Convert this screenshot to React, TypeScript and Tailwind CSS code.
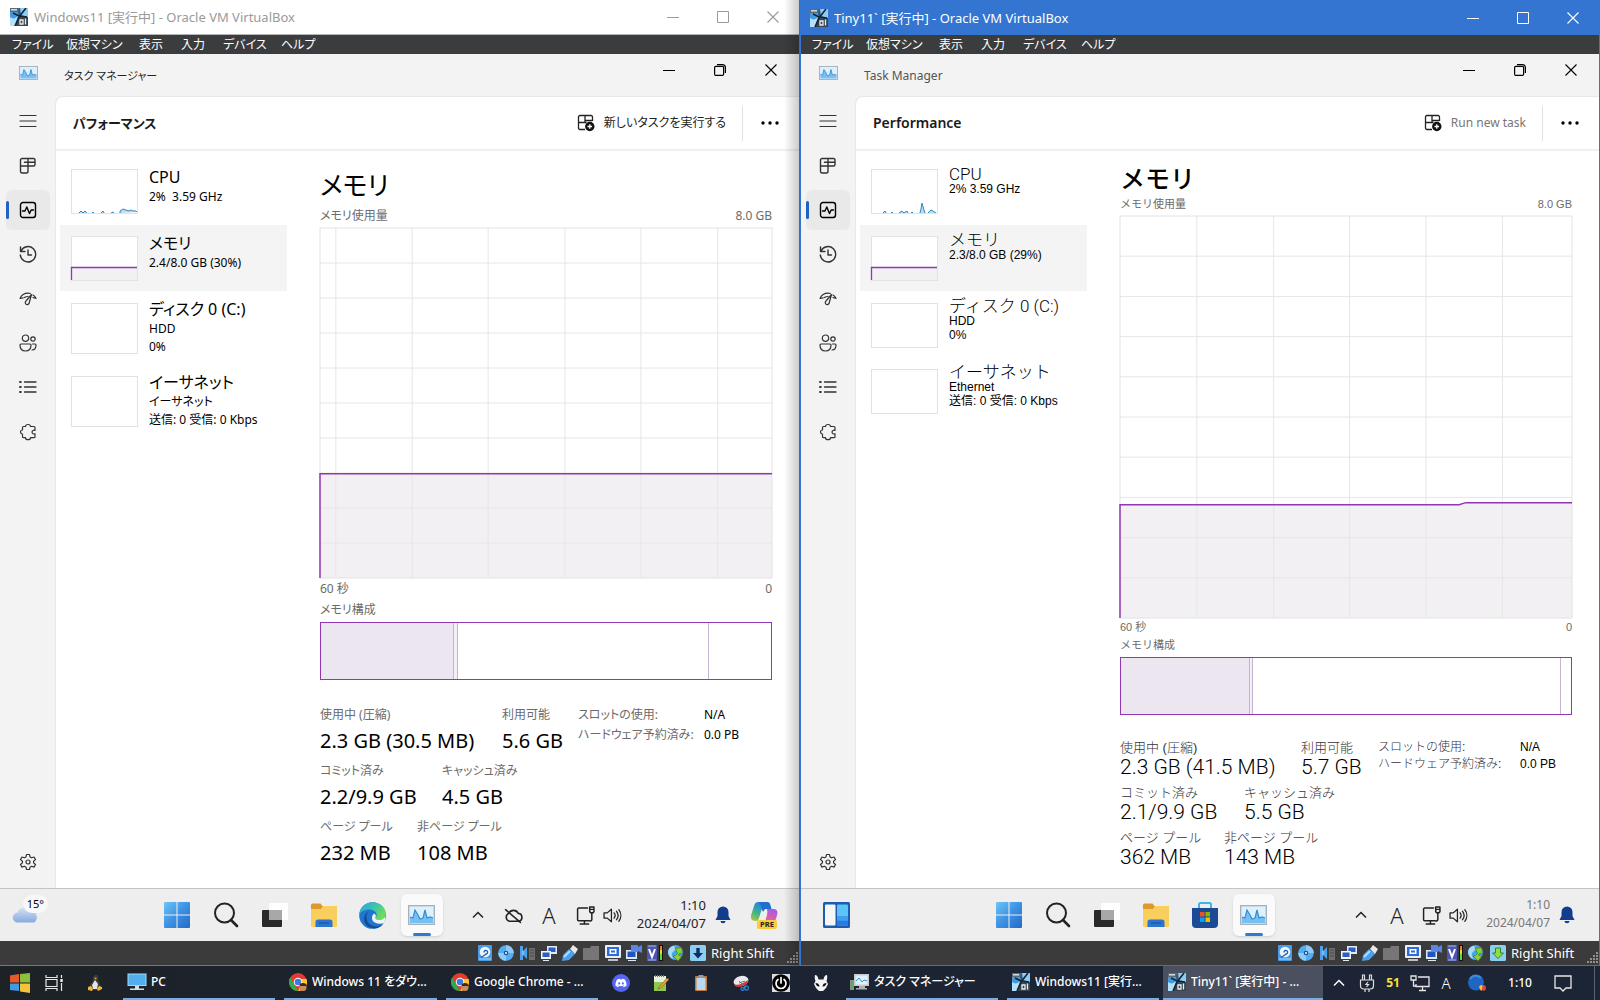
import React from "react";
import { FaDiscord } from "react-icons/fa";

type Kids = { children: React.ReactNode };

/* ---------- line icons ---------- */

function Line({ children, size = "size-[18px]", sw = 1.2 }: Kids & { size?: string; sw?: number }) {
  return (
    <svg viewBox="0 0 18 18" className={size} fill="none" stroke="currentColor" strokeWidth={sw} strokeLinecap="round" strokeLinejoin="round" aria-hidden="true">
      {children}
    </svg>
  );
}

const MenuIcon = () => (
  <Line>
    <path d="M1 3.500h16M1 9h16M1 14.500h16" />
  </Line>
);
const ProcessesIcon = () => (
  <Line sw={1.4}>
    <path d="M3 1.500h11.500a1.500 1.500 0 0 1 1.500 1.500v4.500a1.500 1.500 0 0 1-1.500 1.500H9v5.500a1.500 1.500 0 0 1-1.500 1.500H3a1.500 1.500 0 0 1-1.500-1.500V3A1.500 1.500 0 0 1 3 1.500zM1.500 9H9M9 1.500V9M5.500 5.200H16" />
  </Line>
);
const PerformanceIcon = () => (
  <Line sw={1.4}>
    <rect x="1.500" y="1.500" width="15" height="15" rx="2.500" />
    <path d="M3.500 10h2.500l1.800-4 2.700 6.500 1.700-3.500h2.300" />
  </Line>
);
const HistoryIcon = () => (
  <Line sw={1.4}>
    <path d="M1.500 2v4.500h4.500M2 6a7.700 7.700 0 1 1-.7 4M9 5v5h3.500" />
  </Line>
);
const StartupIcon = () => (
  <Line>
    <path d="M1 8.500c1.500-3.500 4-5.300 8-5.300 1 0 1.600.1 2.300.3M14 5c1.400.8 2.300 1.900 3 3.500M1 8.500l3.200-.6M17 8.500l-3-1M12.500 4.500 7 11a2 2 0 1 0 3.200 2zM5.500 7.500C6.500 6.800 7.500 6.500 9 6.500" />
  </Line>
);
const UsersIcon = () => (
  <Line>
    <circle cx="6.500" cy="4.200" r="3.200" />
    <circle cx="14" cy="5" r="2.200" />
    <path d="M2 10h9a1 1 0 0 1 1 1c0 3.500-1.800 6-5.500 6S1 14.500 1 11a1 1 0 0 1 1-1zM13.500 10h2.500a1 1 0 0 1 1 1c0 3-1.300 5-4 5" />
  </Line>
);
const DetailsIcon = () => (
  <Line sw={1.3}>
    <path d="M5.500 4H17M5.500 9H17M5.500 14H17" />
    <path d="M1 4h.8M1 9h.8M1 14h.8" strokeWidth="2" />
  </Line>
);
const ServicesIcon = () => (
  <Line>
    <path d="M6.500 3.500a2.500 2 0 0 1 5 0h3.500a1 1 0 0 1 1 1v3a2 2 0 0 0-3 1.500 2 2 0 0 0 3 1.700v3a1 1 0 0 1-1 1h-3.500a2.500 2 0 0 1-5 0H4.500a1 1 0 0 1-1-1v-2.700a2 2 0 0 1 0-4V4.500a1 1 0 0 1 1-1z" />
  </Line>
);
const GearIcon = () => (
  <Line>
    <circle cx="9" cy="9" r="2" />
    <path d="M7.500 1.500h3l.5 2.400 1.600.9 2.400-.8 1.500 2.600-1.900 1.600v1.700l1.900 1.600-1.500 2.600-2.400-.8-1.600.9-.5 2.300h-3L7 14.200l-1.600-.9-2.400.8-1.500-2.600 1.900-1.600V8.200L1.500 6.600 3 4l2.400.8L7 3.900z" />
  </Line>
);
const RunTaskIcon = () => (
  <svg viewBox="0 0 18 18" className="size-[18px]" fill="none" stroke="#222" strokeWidth="1.300" aria-hidden="true">
    <path d="M8 15.500H3A1.500 1.500 0 0 1 1.500 14V3A1.500 1.500 0 0 1 3 1.500h11A1.500 1.500 0 0 1 15.500 3v4M8 1.500v7M1.500 8.500h8M8 6.500h7.500" />
    <circle cx="12.800" cy="12.500" r="4.700" fill="#111" stroke="none" />
    <path d="M12.800 10.200v4.600M10.500 12.500h4.600" stroke="#fff" />
  </svg>
);
const Minimize = () => (
  <svg viewBox="0 0 12 12" className="size-3" stroke="currentColor" fill="none" aria-hidden="true">
    <path d="M0 6.500h12" />
  </svg>
);
const Maximize = () => (
  <svg viewBox="0 0 12 12" className="size-3" stroke="currentColor" fill="none" aria-hidden="true">
    <path d="M.5.5h11v11H.5z" />
  </svg>
);
const Restore = () => (
  <svg viewBox="0 0 12 12" className="size-3" stroke="currentColor" strokeWidth="1.200" fill="none" aria-hidden="true">
    <rect x=".6" y="2.400" width="9" height="9" rx="1.200" />
    <path d="M3 .6h5.400a3 3 0 0 1 3 3V9" />
  </svg>
);
const Close = () => (
  <svg viewBox="0 0 12 12" className="size-3" stroke="currentColor" strokeWidth="1.100" fill="none" aria-hidden="true">
    <path d="M.5.5l11 11M11.500.5l-11 11" />
  </svg>
);
const Chevron = () => (
  <svg viewBox="0 0 12 8" className="h-2 w-3" stroke="currentColor" strokeWidth="1.500" fill="none" aria-hidden="true">
    <path d="M1 6.500l5-5 5 5" />
  </svg>
);

/* ---------- colour icons ---------- */

const VBoxIcon = () => (
  <svg viewBox="0 0 18 18" className="size-[18px] shrink-0" aria-hidden="true">
    <rect width="18" height="18" fill="#2a5b86" />
    <path d="M0 0h9l-1 4H0z" fill="#5d6a72" />
    <path d="M1 1.800h6" stroke="#dfe6ea" strokeWidth="1.400" />
    <path d="M0 4h8l1 5-3 9H0z" fill="#3f9ae4" />
    <path d="M10 0h8v9l-7-2z" fill="#8ccdf4" />
    <path d="M0 9c3 2 5 2 8-1l-3 10H0z" fill="#b4e0fb" />
    <path d="M8 10l10-1v9H6z" fill="#39444d" />
    <path d="M16 0 9 9 5 18M3 5l6 3 8 1" stroke="#16242f" strokeWidth="1.600" fill="none" />
    <path d="M10 12h3v4h-3zM15.500 10.500v6" stroke="#e6eef3" strokeWidth="1.300" fill="none" />
  </svg>
);
const GraphIcon = ({ size }: { size: string }) => (
  <svg viewBox="0 0 27 20" className={size} aria-hidden="true">
    <rect x=".7" y=".7" width="25.600" height="18.600" fill="#dff0fb" stroke="#9fb0bd" strokeWidth="1.300" />
    <path d="M2 18v-6l3 1 2-8 3 5 2 4 3-1 2-8 2 8 3-1 3 1v5z" fill="#79c0f2" />
    <path d="M2 12l3 1 2-8 3 5 2 4 3-1 2-8 2 8 3-1 3 1" fill="none" stroke="#2f8fd8" strokeWidth="1.200" />
  </svg>
);
const WinLogo = () => (
  <svg viewBox="0 0 26 26" className="size-[26px]" aria-hidden="true">
    <defs>
      <linearGradient id="winlogo" x1="0" y1="0" x2="1" y2="1">
        <stop offset="0" stopColor="#6cc4fa" />
        <stop offset=".5" stopColor="#3d92e2" />
        <stop offset="1" stopColor="#2669c6" />
      </linearGradient>
    </defs>
    <path d="M0 1a1 1 0 0 1 1-1h11.500v12.500H0zM13.500 0H25a1 1 0 0 1 1 1v11.500H13.500zM0 13.500h12.500V26H1a1 1 0 0 1-1-1zM13.500 13.500H26V25a1 1 0 0 1-1 1H13.500z" fill="url(#winlogo)" />
  </svg>
);
const SearchIcon = () => (
  <svg viewBox="0 0 26 26" className="size-[26px]" fill="none" stroke="#222" aria-hidden="true">
    <circle cx="11.500" cy="11" r="9.500" strokeWidth="2" />
    <path d="M18 18l6 6" strokeWidth="2.600" strokeLinecap="round" />
  </svg>
);
const TaskViewIcon = () => (
  <svg viewBox="0 0 28 26" className="h-[26px] w-7" aria-hidden="true">
    <rect x="1" y="8" width="20" height="17" rx="1" fill="#2a2a2a" />
    <rect x="8" y="1" width="19" height="17" rx="1" fill="#fff" opacity=".9" />
    <rect x="8" y="8" width="13" height="10" fill="#a8a8a8" />
  </svg>
);
const FolderIcon = () => (
  <svg viewBox="0 0 28 26" className="h-[26px] w-7" aria-hidden="true">
    <path d="M1 3a1.500 1.500 0 0 1 1.500-1.500h8l2.500 3-1 3H1z" fill="#dc9a2b" />
    <path d="M1 7h10l2-3h14v20a1 1 0 0 1-1 1H2a1 1 0 0 1-1-1z" fill="#f8ce5c" />
    <path d="M5.500 25v-5a2.500 2.500 0 0 1 2.500-2.500h12a2.500 2.500 0 0 1 2.500 2.500v5z" fill="#2c74cc" />
    <path d="M9 21h10" stroke="#1c5bb0" strokeWidth="1.500" />
  </svg>
);
const EdgeIcon = () => (
  <svg viewBox="0 0 26 26" className="size-[27px]" aria-hidden="true">
    <defs>
      <linearGradient id="edgetop" x1="0" y1="0" x2="1" y2=".5">
        <stop offset="0" stopColor="#2ba7e0" />
        <stop offset=".5" stopColor="#38c0b8" />
        <stop offset="1" stopColor="#6bdc5c" />
      </linearGradient>
    </defs>
    <circle cx="13" cy="13" r="12.800" fill="#1f76cf" />
    <path d="M.3 12C1 5 6.300.2 13 .2 20.500.2 25.800 5.500 25.800 11c0 4-3 6.200-6.300 6.200-2.500 0-4-1-3.800-2 .8-1 1.300-1.700 1.300-3 0-2.500-3-5-7.300-5C5 7.200 1.500 9.500.3 12z" fill="url(#edgetop)" />
    <path d="M10 8.800c-4 2.200-4 10.200 2 13.700 4 2.200 9 1.300 11.800-2C20 27 9 27 5.500 19.500 4 15 6 10 10 8.800z" fill="#134c94" />
    <path d="M15.700 15.200c-.2 1 1.300 2 3.800 2 2.300 0 4.500-1 5.600-3 .3 2 0 4-1 5.700-3 1.500-9 1.500-11-2-1.300-2.500-.5-5.500 1.500-6.900 2 1 1.900 3 1.100 4.200z" fill="#f0f4f6" />
  </svg>
);
const StoreIcon = () => (
  <svg viewBox="0 0 26 26" className="size-[26px]" aria-hidden="true">
    <path d="M7 7V2.500A1.500 1.500 0 0 1 8.500 1h9A1.500 1.500 0 0 1 19 2.500V7" fill="none" stroke="#3db4ee" strokeWidth="2" />
    <path d="M0 6h26v16a4 4 0 0 1-4 4H4a4 4 0 0 1-4-4z" fill="#1b4b94" />
    <path d="M8 10h4.500v4.500H8z" fill="#f25022" />
    <path d="M13.500 10H18v4.500h-4.500z" fill="#7fba00" />
    <path d="M8 15.500h4.500V20H8z" fill="#00a4ef" />
    <path d="M13.500 15.500H18V20h-4.500z" fill="#ffb900" />
  </svg>
);
const WidgetsIcon = () => (
  <svg viewBox="0 0 27 26" className="h-[26px] w-[27px]" aria-hidden="true">
    <rect width="27" height="26" rx="1.500" fill="#1d5cae" />
    <rect x="2" y="2.500" width="10.500" height="21" rx="1" fill="#f4f6f8" />
    <rect x="14" y="2.500" width="11" height="21" rx="1" fill="#5cc3f6" />
    <path d="M14 14h11v4.500H14z" fill="#3c9ff0" />
    <path d="M14 18.500h11v4a1 1 0 0 1-1 1h-9a1 1 0 0 1-1-1z" fill="#2a7be0" />
  </svg>
);
const CloudIcon = () => (
  <svg viewBox="0 0 28 18" className="h-[18px] w-7" aria-hidden="true">
    <defs>
      <linearGradient id="cloud" x1="0" y1="0" x2="0" y2="1">
        <stop offset="0" stopColor="#d4e2f8" />
        <stop offset="1" stopColor="#86aade" />
      </linearGradient>
    </defs>
    <path d="M6 17.500a5 5 0 0 1-.5-10A8 8 0 0 1 20 6.500a6 6 0 0 1 2 11z" fill="url(#cloud)" />
  </svg>
);
const CopilotIcon = () => (
  <svg viewBox="0 0 28 28" className="size-7" aria-hidden="true">
    <defs>
      <linearGradient id="coleft" x1=".3" y1="0" x2="0" y2="1">
        <stop offset="0" stopColor="#2c86d8" />
        <stop offset=".5" stopColor="#3fb488" />
        <stop offset="1" stopColor="#c4c63a" />
      </linearGradient>
      <linearGradient id="coright" x1=".7" y1="0" x2=".4" y2="1">
        <stop offset="0" stopColor="#a35be8" />
        <stop offset=".6" stopColor="#e060a8" />
        <stop offset="1" stopColor="#f59a5a" />
      </linearGradient>
    </defs>
    <path d="M8 1h6l-5 16c-.5 2-1.500 3-3.500 3C1 20 .3 17 1.300 13.500L4 5c.8-2.700 2-4 4-4z" fill="url(#coleft)" />
    <path d="M8 1h9c2.500 0 3 1.500 3.700 4L21.500 8H17c-2 0-3 .5-3.800 3L12 9c-1-5-2-7-4-8z" fill="#1d6fd0" />
    <path d="M17 8h6.500c4 0 4.500 3 3.500 6.500L24.500 22c-1 3-2 4-4 4h-7l3.500-12c.5-2 .5-4 0-6z" fill="url(#coright)" />
    <rect x="7" y="19" width="20" height="9" rx="2" fill="#fbcb3a" />
    <text x="17" y="26.300" textAnchor="middle" fontSize="7.500" fontWeight="700" fontFamily="Noto Sans" fill="#222">PRE</text>
  </svg>
);
const BellIcon = () => (
  <svg viewBox="0 0 16 18" className="h-[18px] w-4" fill="#123d8d" aria-hidden="true">
    <path d="M8 .5a5.500 5.500 0 0 1 5.500 5.500v4l2 4H.5l2-4V6A5.500 5.500 0 0 1 8 .5zM5.500 15h5a2.500 2.300 0 0 1-5 0z" />
  </svg>
);
const NoCloudIcon = () => (
  <Line size="size-[19px]" sw={1.5}>
    <path d="M5 14.500a4 4 0 0 1-.5-7.500 5 5 0 0 1 9 0 3.800 3.800 0 0 1 .5 7.500zM1.500 3.500l14 12" />
  </Line>
);
const NetworkIcon = () => (
  <Line size="size-[19px]" sw={1.4}>
    <path d="M11 2H2.500A1 1 0 0 0 1.500 3v10a1 1 0 0 0 1 1h9.500M4 17h8M8 14v3M13 1h4v4.500l-1 1h-2l-1-1zM13 3.200h4M15 6.500V13a1.500 1.500 0 0 1-2 1" />
  </Line>
);
const VolumeIcon = () => (
  <Line size="size-[19px]">
    <path d="M1 6.500h3l4-3.500v12l-4-3.500H1zM10.500 6.500a4 4 0 0 1 0 5M12.800 5a6.500 6.500 0 0 1 0 8M15 3.500a9 9 0 0 1 0 11" />
  </Line>
);

/* ---------- virtual machine status icons ---------- */

const S = ({ children }: Kids) => (
  <svg viewBox="0 0 16 16" className="size-4" aria-hidden="true">
    {children}
  </svg>
);
const statusIcons: [string, React.ReactNode][] = [
  ["ハードディスク", <S><rect x="1" y="0" width="14" height="16" rx="1" fill="#4a9be8" /><circle cx="8" cy="7" r="5.300" fill="#eef6fe" /><path d="M7 7.500a1.800 1.800 0 1 1 2 1.500c-1.500 1.500-3 2-5 3.500" stroke="#2660b8" strokeWidth="1.400" fill="none" /><path d="M2 14h12" stroke="#a8d6fa" /></S>],
  ["光学ドライブ", <S><circle cx="8" cy="8" r="7.800" fill="#56acf0" /><path d="M8 .2A7.800 7.800 0 0 1 15.800 8L8 8zM8 15.800A7.800 7.800 0 0 1 .2 8L8 8z" fill="#8ccbf8" /><circle cx="8" cy="8" r="2.300" fill="#1d4f9c" /><circle cx="8" cy="8" r="1" fill="#fff" /></S>],
  ["オーディオ", <S><path d="M0 1h3v5l4-4v12l-4-4v5H0z" fill="#4fa0e8" /><path d="M3 6v4" stroke="#b0dcff" /><path d="M9 3h6v12H9z" fill="#6d6d6d" /><path d="M10 5h4M10 8h4M10 11h4" stroke="#4a4a4a" /></S>],
  ["ネットワーク", <S><rect x="6" y="1" width="10" height="8" fill="#dfeaf8" /><rect x="7.500" y="2.500" width="7" height="4.500" fill="#2b5fc6" /><rect x="0" y="6" width="10" height="8" fill="#f2f6fb" /><rect x="1.500" y="7.500" width="7" height="4.500" fill="#2b5fc6" /><path d="M2 15.500h6" stroke="#dfeaf8" /></S>],
  ["USB", <S><path d="M0 16l1-6 6-6 6 5-6 6z" fill="#4c9fea" /><path d="M8 4l3-4 5 4-3 5z" fill="#e8e8e8" /><path d="M2 12l6-6" stroke="#b0dcff" strokeWidth="2" /></S>],
  ["共有フォルダー", <S><path d="M0 3h7l1-2h8v14H0z" fill="#767676" /></S>],
  ["ディスプレイ", <S><rect x="0" y="0" width="16" height="13" rx="1" fill="#e7f0fb" /><rect x="2" y="2" width="12" height="9" fill="#2f6bd0" /><rect x="4.500" y="4" width="7" height="5" fill="#fff" /><rect x="6" y="5.500" width="4" height="2" fill="#2f6bd0" /><path d="M3 15h10" stroke="#e7f0fb" strokeWidth="1.500" /></S>],
  ["録画", <S><rect x="0" y="5" width="11" height="9" fill="#dde9f8" /><rect x="1.500" y="6.500" width="8" height="5.500" fill="#2455be" /><path d="M2 15.500h8" stroke="#dde9f8" /><path d="M5 0h7v2l4-2v8l-4-2v1H5z" fill="#5a86ea" /></S>],
  ["仮想化", <S><rect x="0" y="0" width="10" height="16" fill="#4a55b5" /><path d="M1 1h8M1 15h8" stroke="#9ab4f0" /><path d="M2 4l3 8 3-8" stroke="#fff" strokeWidth="2" fill="none" /><rect x="12" y="0" width="4" height="16" fill="#111" /><path d="M14 1v4" stroke="#e8832c" strokeWidth="2" /><path d="M14 5v4" stroke="#e8d832" strokeWidth="2" /><path d="M14 9v6" stroke="#5ddc32" strokeWidth="2" /></S>],
  ["マウス統合", <S><circle cx="7.500" cy="7.500" r="7.500" fill="#4aa4ea" /><path d="M5 1c3 1 4 3 1 5s-3 5 0 8c-4-1-6-4-6-7s2-5 5-6z" fill="#a5dcf8" /><path d="M7 3h7v7l-2-2-1.500 2 3 2-3.500 4-5-5 2.500-.5L9.500 8z" fill="#8bd13c" stroke="#3f7d1c" strokeWidth=".7" /></S>],
];

function KeyIcon({ active }: { active: boolean }) {
  return (
    <S>
      <rect width="16" height="16" rx="1.500" fill="#8ccdf5" />
      {active ? (
        <path d="M8 13.500L2.500 8H5.500V3h5v5h3z" fill="#8fe03c" stroke="#2b7a1c" strokeWidth=".9" />
      ) : (
        <path d="M8 13.500L3 8h3.300V3h3.400v5H13z" fill="#102c5c" />
      )}
    </S>
  );
}

/* ---------- performance data ---------- */

type Resource = { name: string; lines: string[]; kind: "cpu" | "memory" | "empty" };
type Stat = { label: string; value: string; width: string };
type Machine = {
  id: string;
  windowTitle: string;
  active: boolean;
  appTitle: string;
  heading: string;
  runTask: string;
  cpuPath: string;
  resources: Resource[];
  verticals: number[];
  usage: string;
  bar: { used: string; modified: string; standby: string };
  stats: Stat[][];
  details: [string, string][];
};

const machines: Machine[] = [
  {
    id: "win11",
    windowTitle: "Windows11 [実行中] - Oracle VM VirtualBox",
    active: false,
    appTitle: "タスク マネージャー",
    heading: "パフォーマンス",
    runTask: "新しいタスクを実行する",
    cpuPath: "M7 43l2-2 2 2 2-2 2 2M20 43l1-1 1 1M29 43l2-2 1 2M39 43l2-1 1 1M48 43v-2l3-2 3 1 3 1 2-1 2 1 3 0 1 1",
    resources: [
      { name: "CPU", lines: ["2%  3.59 GHz"], kind: "cpu" },
      { name: "メモリ", lines: ["2.4/8.0 GB (30%)"], kind: "memory" },
      { name: "ディスク 0 (C:)", lines: ["HDD", "0%"], kind: "empty" },
      { name: "イーサネット", lines: ["イーサネット", "送信: 0 受信: 0 Kbps"], kind: "empty" },
    ],
    verticals: [3.5, 20.4, 37.2, 54.2, 71, 88],
    usage: "M0 100V70.200H100",
    bar: { used: "w-[29.5%]", modified: "w-[0.9%]", standby: "w-[55.8%]" },
    stats: [
      [
        { label: "使用中 (圧縮)", value: "2.3 GB (30.5 MB)", width: "w-[182px]" },
        { label: "利用可能", value: "5.6 GB", width: "w-[76px]" },
      ],
      [
        { label: "コミット済み", value: "2.2/9.9 GB", width: "w-[122px]" },
        { label: "キャッシュ済み", value: "4.5 GB", width: "w-[122px]" },
      ],
      [
        { label: "ページ プール", value: "232 MB", width: "w-[97px]" },
        { label: "非ページ プール", value: "108 MB", width: "w-[122px]" },
      ],
    ],
    details: [
      ["スロットの使用:", "N/A"],
      ["ハードウェア予約済み:", "0.0 PB"],
    ],
  },
  {
    id: "tiny11",
    windowTitle: "Tiny11` [実行中] - Oracle VM VirtualBox",
    active: true,
    appTitle: "Task Manager",
    heading: "Performance",
    runTask: "Run new task",
    cpuPath: "M11 43l2-2 1 2M19 43l1-1 1 1M27 43l3-2 2 2 3-2 1 2M39 43l1-1 1 1M48 43l1-4 1-6 2 7 1 3M56 43l3-3 2 1 3 2",
    resources: [
      { name: "CPU", lines: ["2% 3.59 GHz"], kind: "cpu" },
      { name: "メモリ", lines: ["2.3/8.0 GB (29%)"], kind: "memory" },
      { name: "ディスク 0 (C:)", lines: ["HDD", "0%"], kind: "empty" },
      { name: "イーサネット", lines: ["Ethernet", "送信: 0 受信: 0 Kbps"], kind: "empty" },
    ],
    verticals: [17, 34, 50.8, 67.7, 84.6],
    usage: "M0 100V71.800H75L76.500 71.300H100",
    bar: { used: "w-[28.6%]", modified: "w-[0.7%]", standby: "w-[68.5%]" },
    stats: [
      [
        { label: "使用中 (圧縮)", value: "2.3 GB (41.5 MB)", width: "w-[181px]" },
        { label: "利用可能", value: "5.7 GB", width: "w-[77px]" },
      ],
      [
        { label: "コミット済み", value: "2.1/9.9 GB", width: "w-[124px]" },
        { label: "キャッシュ済み", value: "5.5 GB", width: "w-[122px]" },
      ],
      [
        { label: "ページ プール", value: "362 MB", width: "w-[104px]" },
        { label: "非ページ プール", value: "143 MB", width: "w-[122px]" },
      ],
    ],
    details: [
      ["スロットの使用:", "N/A"],
      ["ハードウェア予約済み:", "0.0 PB"],
    ],
  },
];

/* ---------- window parts ---------- */

function TitleBar({ m }: { m: Machine }) {
  return (
    <header className={m.active ? "flex h-[35px] items-center bg-[#3375d0] pl-2.5 text-white" : "flex h-[35px] items-center border-b border-[#b5b5b5] bg-white pl-2.5 text-[#9a9a9a]"}>
      <VBoxIcon />
      <h1 className="min-w-0 flex-1 truncate pl-1.5 text-[13px] leading-5">{m.windowTitle}</h1>
      <div className="flex pr-0.5">
        <button aria-label="最小化" className="flex h-[34px] w-[50px] items-center justify-center"><Minimize /></button>
        <button aria-label="最大化" className="flex h-[34px] w-[50px] items-center justify-center"><Maximize /></button>
        <button aria-label="閉じる" className="flex h-[34px] w-[50px] items-center justify-center"><Close /></button>
      </div>
    </header>
  );
}

const menus: [string, string][] = [
  ["ファイル", "w-[54px]"],
  ["仮想マシン", "w-[73px]"],
  ["表示", "w-[42px]"],
  ["入力", "w-[42px]"],
  ["デバイス", "w-[58px]"],
  ["ヘルプ", "w-[50px]"],
];

function MenuBar() {
  return (
    <nav className="flex h-[19px] items-center bg-[#3b3c3d] pl-3 text-xs leading-[18px] text-white">
      {menus.map(([name, width]) => (
        <button key={name} className={`${width} whitespace-nowrap text-left`}>{name}</button>
      ))}
    </nav>
  );
}

const railItems: [string, () => React.ReactNode][] = [
  ["メニュー", MenuIcon],
  ["プロセス", ProcessesIcon],
  ["パフォーマンス", PerformanceIcon],
  ["アプリの履歴", HistoryIcon],
  ["スタートアップ アプリ", StartupIcon],
  ["ユーザー", UsersIcon],
  ["詳細", DetailsIcon],
  ["サービス", ServicesIcon],
];

function Rail() {
  return (
    <nav className="flex w-[55px] shrink-0 flex-col justify-between pb-1.5 pt-[3px] text-[#333]">
      <div className="grid h-[355px] auto-rows-fr">
        {railItems.map(([name, Icon], i) => (
          <div key={name} className="flex items-center pl-1.5">
            <button aria-label={name} className={i === 2 ? "relative flex h-10 w-11 items-center justify-center rounded-md bg-[#e9e9e9] text-black" : "flex h-10 w-11 items-center justify-center rounded-md"}>
              {i === 2 && <span className="absolute left-0 h-[18px] w-[3px] rounded-full bg-[#1f62c0]" />}
              <Icon />
            </button>
          </div>
        ))}
      </div>
      <button aria-label="設定" className="ml-1.5 flex h-10 w-11 items-center justify-center"><GearIcon /></button>
    </nav>
  );
}

function Thumb({ m, kind, tall }: { m: Machine; kind: Resource["kind"]; tall: boolean }) {
  return (
    <div className={tall ? "h-[51px] w-[67px] shrink-0 border border-[#e2e2e2] bg-white" : "h-[45px] w-[67px] shrink-0 border border-[#e2e2e2] bg-white"}>
      {kind === "cpu" && (
        <svg viewBox="0 0 65 43" className="h-full w-full" aria-hidden="true">
          <path d={m.cpuPath} fill="#b9dcf0" stroke="#3389bf" />
        </svg>
      )}
      {kind === "memory" && (
        <svg viewBox="0 0 65 43" className="h-full w-full overflow-visible" aria-hidden="true">
          <path d="M-.5 30.500H65V43H-.5z" fill="#f3f0f4" />
          <path d="M-.5 43V30.500H65" fill="none" stroke="#9137b3" strokeWidth="1.300" />
        </svg>
      )}
    </div>
  );
}

function ResourceList({ m }: { m: Machine }) {
  const thin = m.active;
  return (
    <ul className="w-[231px] shrink-0 pl-1 pt-2">
      {m.resources.map((r) => {
        const tall = !thin && r.kind === "empty";
        return (
          <li key={r.name}>
            <button className={`flex w-full items-start gap-[11px] pl-[11px] text-left ${tall ? "h-[73px]" : "h-[66px]"} ${r.kind === "memory" ? "bg-[#f4f4f4]" : ""}`}>
              <span className={r.kind === "cpu" ? "pt-2.5" : r.kind === "memory" ? "pt-[11px]" : "pt-3"}><Thumb m={m} kind={r.kind} tall={tall} /></span>
              <span className="flex min-w-0 flex-col whitespace-pre pt-[7px] text-black">
                <span className={thin ? "font-['Roboto','Noto_Sans_CJK_JP',sans-serif] text-[17px] font-light leading-4" : "text-base leading-[22px]"}>{r.name}</span>
                {r.lines.map((l) => (
                  <span key={l} className={thin ? "text-xs leading-[14px]" : "text-xs leading-[18px]"}>{l}</span>
                ))}
              </span>
            </button>
          </li>
        );
      })}
    </ul>
  );
}

const rows = [10, 20, 30, 40, 50, 60, 70, 80, 90];

function UsageChart({ m }: { m: Machine }) {
  return (
    <div className="relative min-h-[200px] flex-1">
      <svg viewBox="0 0 100 100" preserveAspectRatio="none" className="absolute inset-0 h-full w-full overflow-visible" role="img" aria-label="メモリ使用量">
        <path d={`${m.usage}V100z`} fill="#f3f0f4" />
        {rows.map((y) => (
          <path key={y} d={`M0 ${y}H100`} stroke="#e6e6e6" vectorEffect="non-scaling-stroke" />
        ))}
        {m.verticals.map((x) => (
          <path key={x} d={`M${x} 0V100`} stroke="#e6e6e6" vectorEffect="non-scaling-stroke" />
        ))}
        <path d="M0 0H100V100H0z" fill="none" stroke="#e2e2e2" vectorEffect="non-scaling-stroke" />
        <path d={m.usage} fill="none" stroke="#9137b3" strokeWidth="1.500" vectorEffect="non-scaling-stroke" />
      </svg>
    </div>
  );
}

function MemoryPane({ m }: { m: Machine }) {
  const thin = m.active;
  const caption = `flex justify-between leading-[18px] text-[#6b6b6b] ${thin ? "text-[11px]" : "text-xs"}`;
  return (
    <section className={thin ? "flex min-w-0 flex-1 flex-col pb-[21px] pl-[33px] pr-7 pt-2" : "flex min-w-0 flex-1 flex-col pb-[19px] pl-[33px] pr-7 pt-3"}>
      <h2 className={thin ? "h-9 text-[25px] font-medium leading-10 text-black" : "h-11 text-[26px] leading-[44px] text-black"}>メモリ</h2>
      <div className={caption}><span>メモリ使用量</span><span>8.0 GB</span></div>
      <div className="flex flex-1 flex-col pt-[3px]"><UsageChart m={m} /></div>
      <div className={thin ? caption : `${caption} pt-0.5`}><span>60 秒</span><span>0</span></div>
      <div className={thin ? caption : `${caption} pt-[3px]`}><span>メモリ構成</span></div>
      <div className="mt-[3px] flex h-[58px] border border-[#9137b3] bg-white">
        <div className={`${m.bar.used} border-r border-[#c9b3d3] bg-[#ece6f0]`} />
        <div className={`${m.bar.modified} border-r border-[#c9b3d3] bg-[#f4eff6]`} />
        <div className={`${m.bar.standby} border-r border-[#c9b3d3]`} />
      </div>
      <div className={thin ? "flex pt-6" : "flex pt-[25px]"}>
        <div className={thin ? "flex flex-col gap-[7px]" : "flex flex-col gap-1"}>
          {m.stats.map((row, i) => (
            <dl key={i} className="flex whitespace-nowrap">
              {row.map((s) => (
                <div key={s.label} className={s.width}>
                  <dt className={thin ? "text-[13px] font-light leading-[18px] text-[#333]" : "text-xs leading-5 text-[#6b6b6b]"}>{s.label}</dt>
                  <dd className={thin ? "font-['Roboto','Noto_Sans_CJK_JP',sans-serif] text-[21px] font-light leading-5 text-black" : "text-xl leading-8 text-black"}>{s.value}</dd>
                </div>
              ))}
            </dl>
          ))}
        </div>
        <table className="h-fit whitespace-nowrap text-xs">
          <tbody>
            {m.details.map(([k, v]) => (
              <tr key={k} className={thin ? "h-[17px] leading-[17px]" : "h-5 leading-5"}>
                <th scope="row" className={thin ? "w-[142px] p-0 text-left font-light text-[#333]" : "w-[126px] p-0 text-left font-normal text-[#6b6b6b]"}>{k}</th>
                <td className="p-0 text-black">{v}</td>
              </tr>
            ))}
          </tbody>
        </table>
      </div>
    </section>
  );
}

function TaskManager({ m }: { m: Machine }) {
  return (
    <div className="flex flex-1 flex-col bg-[#f3f3f3]">
      <div className="flex h-[42px] items-start">
        <div className="flex h-[37px] w-14 shrink-0 items-center justify-center"><GraphIcon size="h-[14px] w-[19px]" /></div>
        <span className={m.active ? "flex-1 pl-2 pt-3 text-xs leading-5 text-[#555]" : "flex-1 pl-2 pt-3 text-[11px] leading-5 text-[#222]"}>{m.appTitle}</span>
        <div className="flex pr-1 text-black">
          <button aria-label="最小化" className="flex h-[31px] w-[51px] items-center justify-center"><Minimize /></button>
          <button aria-label="元に戻す" className="flex h-[31px] w-[51px] items-center justify-center"><Restore /></button>
          <button aria-label="閉じる" className="flex h-[31px] w-[51px] items-center justify-center"><Close /></button>
        </div>
      </div>
      <div className="flex flex-1">
        <Rail />
        <main className="flex min-w-0 flex-1 flex-col rounded-tl-lg border-l border-t border-[#e8e8e8] bg-white">
          <div className="flex h-[54px] shrink-0 items-center border-b-2 border-[#f0f0f0] pl-[17px]">
            <h2 className={m.active ? "flex-1 text-sm font-semibold leading-5 text-[#1a1a1a]" : "flex-1 text-[13px] font-semibold leading-5 text-[#1a1a1a]"}>{m.heading}</h2>
            <button className={m.active ? "flex items-center gap-[9px] text-xs leading-5 text-[#777]" : "flex items-center gap-[9px] text-xs leading-5 text-[#222]"}>
              <RunTaskIcon />
              {m.runTask}
            </button>
            <span className="ml-4 h-[35px] w-px bg-[#e2e2e2]" />
            <button aria-label="その他のオプション" className="flex h-9 w-[57px] items-center justify-center pr-1">
              <svg viewBox="0 0 18 4" className="h-1 w-[18px]" aria-hidden="true">
                <circle cx="2" cy="2" r="1.700" /><circle cx="9" cy="2" r="1.700" /><circle cx="16" cy="2" r="1.700" />
              </svg>
            </button>
          </div>
          <div className={m.active ? "flex flex-1 font-['Liberation_Sans','Noto_Sans_CJK_JP',sans-serif] [font-feature-settings:normal]" : "flex flex-1"}>
            <ResourceList m={m} />
            <MemoryPane m={m} />
          </div>
        </main>
      </div>
    </div>
  );
}

function DockButton({ name, children, selected = false }: Kids & { name: string; selected?: boolean }) {
  return (
    <button aria-label={name} className="flex w-[49px] items-center justify-center">
      {selected ? (
        <span className="relative flex h-[42px] w-[42px] items-center justify-center rounded-md bg-[#fafafa] shadow-sm">
          {children}
          <span className="absolute bottom-0 h-[3px] w-[18px] rounded-full bg-[#2f78d6]" />
        </span>
      ) : (
        children
      )}
    </button>
  );
}

const cell = "flex shrink-0 items-center justify-center";

function GuestTaskbar({ m }: { m: Machine }) {
  const tiny = m.active;
  return (
    <footer className="flex h-[53px] shrink-0 items-stretch border-t border-[#c4c4c4] bg-[#eeeeee] text-[#222]">
      {tiny ? (
        <div className="flex w-[184px] shrink-0 items-center pl-[23px]"><button aria-label="ウィジェット"><WidgetsIcon /></button></div>
      ) : (
        <div className="w-[152px] shrink-0 pl-3 pt-1.5">
          <button aria-label="天気" className="relative flex h-7 w-9 items-end">
            <CloudIcon />
            <span className="absolute right-0 top-0 rounded-full bg-[#f8f8f8] px-1 text-[11px] leading-[18px] text-black">15°</span>
          </button>
        </div>
      )}
      <DockButton name="スタート"><WinLogo /></DockButton>
      <DockButton name="検索"><SearchIcon /></DockButton>
      <DockButton name="タスク ビュー"><TaskViewIcon /></DockButton>
      <DockButton name="エクスプローラー"><FolderIcon /></DockButton>
      {tiny ? <DockButton name="Microsoft Store"><StoreIcon /></DockButton> : <DockButton name="Microsoft Edge"><EdgeIcon /></DockButton>}
      <DockButton name="タスク マネージャー" selected><GraphIcon size="h-5 w-[27px]" /></DockButton>
      <div className={tiny ? "ml-auto flex pr-4" : "ml-auto flex pr-3"}>
        <button aria-label="隠れているインジケーター" className={`${cell} ${tiny ? "w-[30px]" : "w-11"}`}><Chevron /></button>
        {!tiny && <button aria-label="OneDrive" className={`${cell} w-[26px]`}><NoCloudIcon /></button>}
        <button aria-label="入力モード" className={`${cell} text-[22px] font-light ${tiny ? "w-[42px]" : "w-[46px]"}`}>A</button>
        <button aria-label="ネットワーク" className={`${cell} w-[27px]`}><NetworkIcon /></button>
        <button aria-label="音量" className={`${cell} w-[26px]`}><VolumeIcon /></button>
        <div className={tiny ? "w-[79px] pt-[7px] text-right text-xs leading-[18px] text-[#777]" : "w-[81px] pt-[7px] text-right text-[13px] leading-[18px] text-[#222]"}>
          <div>1:10</div>
          <div>2024/04/07</div>
        </div>
        <button aria-label="通知" className={`${cell} w-[34px]`}><BellIcon /></button>
        {!tiny && <button aria-label="Copilot" className={`${cell} w-12`}><CopilotIcon /></button>}
      </div>
    </footer>
  );
}

function StatusBar({ m }: { m: Machine }) {
  return (
    <div className="flex h-[25px] shrink-0 items-center justify-end border-b border-[#777] bg-[#3b3b3b] text-white">
      <div className="grid w-[234px] grid-cols-11">
        {statusIcons.map(([name, icon]) => (
          <button key={name} aria-label={name} className="flex items-center">{icon}</button>
        ))}
        <button aria-label="ホストキー" className="flex items-center"><KeyIcon active={m.active} /></button>
      </div>
      <span className="w-[74px] text-[13px] leading-5">Right Shift</span>
      <svg viewBox="0 0 14 14" className="mr-px h-[14px] w-[14px] self-end" fill="#909090" aria-hidden="true">
        <path d="M11 1h2v2h-2zM11 4h2v2h-2zM11 7h2v2h-2zM11 10h2v2h-2zM8 4h2v2H8zM8 7h2v2H8zM8 10h2v2H8zM5 7h2v2H5zM5 10h2v2H5zM2 10h2v2H2z" />
      </svg>
    </div>
  );
}

function VmWindow({ m }: { m: Machine }) {
  return (
    <section className="relative flex min-w-0 flex-1 flex-col">
      <TitleBar m={m} />
      <MenuBar />
      <TaskManager m={m} />
      <GuestTaskbar m={m} />
      <StatusBar m={m} />
      {m.active ? (
        <div className="pointer-events-none absolute inset-0 border-x border-b border-[#3375d0]" />
      ) : (
        <div className="pointer-events-none absolute inset-y-0 right-0 w-4 border-r border-[#666] bg-gradient-to-r from-transparent to-black/20" />
      )}
    </section>
  );
}

/* ---------- host taskbar ---------- */

const ChromeIcon = () => (
  <svg viewBox="0 0 18 18" className="size-[18px] shrink-0" aria-hidden="true">
    <circle cx="9" cy="9" r="9" fill="#e33b2e" />
    <path d="M1.200 4.500 5.500 12l3.500 6A9 9 0 0 1 1.200 4.500z" fill="#2da94f" />
    <path d="M17.500 6H9l3.800 5L9 18A9 9 0 0 0 17.500 6z" fill="#fcc934" />
    <circle cx="9" cy="9" r="4.300" fill="#fff" />
    <circle cx="9" cy="9" r="3.300" fill="#3a7be0" />
    <circle cx="14" cy="14.500" r="3.500" fill="#c98d5f" />
    <path d="M10.500 13a3.500 3 0 0 1 7 0z" fill="#3a2a20" />
  </svg>
);
const HostStart = () => (
  <svg viewBox="0 0 22 20" className="h-5 w-[22px]" aria-hidden="true">
    <path d="M1 2.500 10 1v8.500H1z" fill="#e8582c" />
    <path d="M11 1 21 0v9.500H11z" fill="#8cc03c" />
    <path d="M1 10.500h9V18l-9-1z" fill="#3f9be6" />
    <path d="M11 10.500h10V20l-10-1.500z" fill="#f6c23a" />
  </svg>
);
const HostTaskView = () => (
  <svg viewBox="0 0 18 16" className="h-4 w-[18px]" stroke="#e8e8e8" strokeWidth="1.200" fill="none" aria-hidden="true">
    <path d="M1 0v2.500h11V0M1 16v-2.500h11V16M1 4.500h11v7H1zM16.500 0v3M16.500 8v8" />
    <path d="M16.500 4v3" strokeWidth="2.500" />
  </svg>
);
const Penguin = () => (
  <svg viewBox="0 0 16 18" className="h-[18px] w-4" aria-hidden="true">
    <path d="M8 1c3-1 3.500 2 3 4l3 8-3 3H5l-3-3 4-7c0-2 0-4 2-5z" fill="#3a3a3a" />
    <path d="M8 6l3 4-1 5H6l-1-4z" fill="#e6e6e6" />
    <path d="M7 3.500l3 .5-1.500 1.500zM1 13l3-1 2 3-1 2-4-1zM15 13l-3-1-2 3 1 2 4-2z" fill="#f4b62c" />
  </svg>
);
const PcIcon = () => (
  <svg viewBox="0 0 20 18" className="h-[18px] w-5 shrink-0" aria-hidden="true">
    <rect x="1" y="1" width="18" height="11.500" fill="#52aeec" stroke="#a7d8f8" />
    <path d="M8 13h4v2.500H8zM3 15.500h14V17H3z" fill="#d6dde2" />
  </svg>
);
const HostMonitor = () => (
  <svg viewBox="0 0 20 18" className="h-[18px] w-5 shrink-0" aria-hidden="true">
    <rect x="4" y="1" width="15" height="12" fill="#c9c9c9" />
    <rect x="5.500" y="2.500" width="12" height="9" fill="#dff1fb" />
    <path d="M6 8l3-3 3 4 2-2 3 1" stroke="#2f8fd8" fill="none" />
    <path d="M9 13h6v2H9zM6 15h11v1.500H6z" fill="#b0b0b0" />
    <path d="M0 7h4v10H0z" fill="#8a8f8a" /><path d="M1 9h2v6H1z" fill="#4caf50" />
  </svg>
);

function TaskButton({ icon, text, width, active = false }: { icon: React.ReactNode; text: string; width: string; active?: boolean }) {
  return (
    <button className={`${width} flex min-w-0 items-center gap-1 border-b-2 border-[#76aee6] pl-1 text-left text-xs font-medium leading-5 ${active ? "bg-[#4a5060]" : ""}`}>
      <span className="flex w-5 shrink-0 justify-center">{icon}</span>
      <span className="truncate">{text}</span>
    </button>
  );
}

const pinned: [string, React.ReactNode][] = [
  ["Discord", <span className="flex size-[18px] items-center justify-center rounded-full bg-[#5865f2]"><FaDiscord className="size-3" /></span>],
  ["メモ帳", <S><rect x="1" y="1" width="12" height="15" fill="#e8efe0" /><path d="M1 7h12v9H1z" fill="#8cc84b" /><path d="M2 1h10" stroke="#777" strokeDasharray="1 1" strokeWidth="2" /><path d="M6 12l8-9 2 1.500-8 8.500-3 1z" fill="#e9a33a" stroke="#704b1c" strokeWidth=".5" /></S>],
  ["クリップボード", <S><rect x="2" y="1" width="12" height="15" rx="1" fill="#c07a3e" /><rect x="3.500" y="3" width="9" height="12" fill="#b9d8f2" /><path d="M5.500 0h5v3h-5z" fill="#9a9a9a" /></S>],
  ["Snipping Tool", <S><ellipse cx="8" cy="6" rx="7.500" ry="5" fill="#e9e9ec" transform="rotate(-15 8 6)" /><path d="M1 9c3 2 8 0 14-4l-1 4c-4 3-9 4-12 2z" fill="#cf3a3a" /><path d="M6 6l7 7M6 8l6-2" stroke="#777" /><circle cx="13.500" cy="13" r="2" fill="none" stroke="#2c7cd0" strokeWidth="1.300" /><circle cx="9.500" cy="14" r="1.500" fill="none" stroke="#2c7cd0" strokeWidth="1.300" /></S>],
  ["電源", <svg viewBox="0 0 18 18" className="size-[18px]" aria-hidden="true"><rect width="18" height="18" fill="#ddd" /><circle cx="9" cy="9" r="8.800" fill="#000" /><path d="M6 5.500a5 5 0 1 0 6 0M9 3.500v5.500" stroke="#fff" strokeWidth="1.700" fill="none" strokeLinecap="round" /></svg>],
  ["foobar2000", <S><path d="M2 0c2 0 3 2 3.500 4.500h5C11 2 12 0 14 0c.5 2 .3 4-.5 6l1.500 3-2 4-3 3H6l-3-3-2-4 1.500-3C1.700 4 1.500 2 2 0z" fill="#f4f4f4" /><path d="M2.500 8c2 0 4 1 4 3.500-2 .5-3.500-1-4-3.500zM13.500 8c-2 0-4 1-4 3.500 2 .5 3.500-1 4-3.500z" fill="#111" /></S>],
];

function HostTaskbar() {
  return (
    <footer className="flex h-[34px] shrink-0 items-stretch bg-gradient-to-r from-[#1d2226] via-[#1c2434] to-[#1c2536] text-white">
      <button aria-label="スタート" className={`${cell} w-10`}><HostStart /></button>
      <button aria-label="タスク ビュー" className={`${cell} w-[27px]`}><HostTaskView /></button>
      <button aria-label="Linux" className={`${cell} w-14`}><Penguin /></button>
      <TaskButton icon={<PcIcon />} text="PC" width="w-[152px]" />
      <span className="w-[9px]" />
      <TaskButton icon={<ChromeIcon />} text="Windows 11 をダウ..." width="w-[153px]" />
      <span className="w-[9px]" />
      <TaskButton icon={<ChromeIcon />} text="Google Chrome - ..." width="w-[152px]" />
      <span className="w-[3px]" />
      {pinned.map(([name, icon]) => (
        <button key={name} aria-label={name} className={`${cell} w-10`}>{icon}</button>
      ))}
      <span className="w-[5px]" />
      <TaskButton icon={<HostMonitor />} text="タスク マネージャー" width="w-[152px]" />
      <span className="w-[9px]" />
      <TaskButton icon={<VBoxIcon />} text="Windows11 [実行..." width="w-[152px]" />
      <span className="w-1" />
      <TaskButton icon={<VBoxIcon />} text="Tiny11` [実行中] - ..." width="w-[160px]" active />
      <div className="ml-auto flex">
        <button aria-label="隠れているインジケーター" className={`${cell} w-[31px]`}><Chevron /></button>
        <button aria-label="電源プラン" className={`${cell} w-[26px]`}>
          <svg viewBox="0 0 16 18" className="h-[18px] w-4" fill="none" stroke="#ddd" strokeWidth="1.200" aria-hidden="true">
            <path d="M1.500 6h13v6a3 3 0 0 1-3 3h-7a3 3 0 0 1-3-3zM3.500 6V1h2v5M10.500 6V1h2v5M6 15v3M10 15v3M9 8l-2 2.500h2.500L7.500 13" />
          </svg>
        </button>
        <span className={`${cell} w-[26px] text-xs font-bold text-[#f7e03c]`}>51</span>
        <button aria-label="ネットワーク" className={`${cell} w-[28px]`}>
          <svg viewBox="0 0 20 18" className="h-[18px] w-5" fill="none" stroke="#e6e6e6" strokeWidth="1.300" aria-hidden="true">
            <path d="M8 3h11v9.500H6V10M9 16.500h7M12.500 12.500v4M1 2h5v4H1zM3.500 6v6H6" />
          </svg>
        </button>
        <button aria-label="入力モード" className={`${cell} w-6 text-[15px] font-light`}>A</button>
        <button aria-label="同期" className={`${cell} w-[38px]`}>
          <svg viewBox="0 0 18 18" className="size-[18px]" aria-hidden="true">
            <circle cx="8" cy="8.500" r="8" fill="#1f66c4" />
            <path d="M2 5a7 7 0 0 1 11-1" stroke="#3f8be2" strokeWidth="2" fill="none" />
            <path d="M11 13a3 3 0 0 1 3-2l2 3-3 3z" fill="#f6c23a" /><path d="M15 11a3 3 0 0 1 0 6l-1-3z" fill="#d84a3a" />
          </svg>
        </button>
        <span className={`${cell} w-12 text-xs font-medium`}>1:10</span>
        <button aria-label="通知" className={`${cell} w-[38px]`}>
          <svg viewBox="0 0 18 18" className="size-[18px]" fill="none" stroke="#e6e6e6" strokeWidth="1.300" aria-hidden="true">
            <path d="M1 2h16v12h-5l-3 3-3-3H1z" />
          </svg>
        </button>
        <button aria-label="デスクトップの表示" className="ml-3 w-[6px] border-l border-[#5a6272]" />
      </div>
    </footer>
  );
}

export default function App() {
  return (
    <div className="flex min-h-screen flex-col overflow-hidden bg-white font-['Noto_Sans','Noto_Sans_CJK_JP',sans-serif] [font-feature-settings:'palt']">
      <div className="flex flex-1">
        {machines.map((m) => (
          <VmWindow key={m.id} m={m} />
        ))}
      </div>
      <HostTaskbar />
    </div>
  );
}
